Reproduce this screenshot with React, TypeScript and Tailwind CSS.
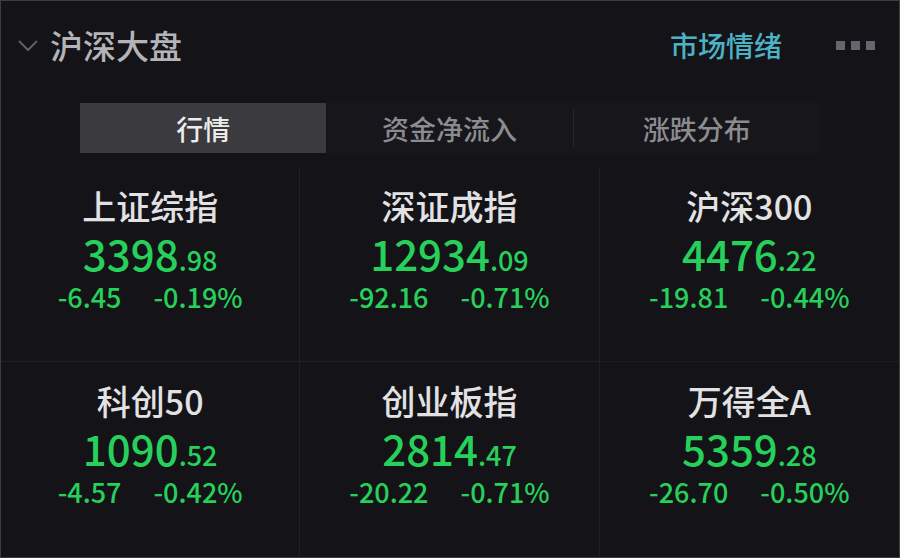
const indices = [
  { name: "上证综指", int: "3398", dec: ".98", chg: "-6.45", pct: "-0.19%" },
  { name: "深证成指", int: "12934", dec: ".09", chg: "-92.16", pct: "-0.71%" },
  { name: "沪深300", int: "4476", dec: ".22", chg: "-19.81", pct: "-0.44%" },
  { name: "科创50", int: "1090", dec: ".52", chg: "-4.57", pct: "-0.42%" },
  { name: "创业板指", int: "2814", dec: ".47", chg: "-20.22", pct: "-0.71%" },
  { name: "万得全A", int: "5359", dec: ".28", chg: "-26.70", pct: "-0.50%" },
];

const tabs = ["行情", "资金净流入", "涨跌分布"];

export default function App() {
  return (
    <div
      className="w-[900px] h-[558px] bg-[#131318] border border-[#3c3c42] overflow-hidden flex flex-col font-medium"
      style={{ fontFamily: '"Noto Sans CJK SC", "Noto Sans", sans-serif' }}
    >
      <div className="flex items-center h-[88px] pl-[16px] pr-[24px]">
        <svg width="22" height="14" viewBox="0 0 22 14" className="mr-[11px] mt-[2px]">
          <path d="M2 2 L11 11 L20 2" fill="none" stroke="#5f5f66" strokeWidth="2" />
        </svg>
        <span className="text-[33px] leading-none text-[#b4b4b8]">沪深大盘</span>
        <span className="ml-auto text-[28px] leading-none text-[#4cb2c6]">市场情绪</span>
        <div className="flex gap-[6px] ml-[54px]">
          <span className="w-[9px] h-[9px] bg-[#66666c]" />
          <span className="w-[9px] h-[9px] bg-[#66666c]" />
          <span className="w-[9px] h-[9px] bg-[#66666c]" />
        </div>
      </div>

      <div className="flex mx-[79px] h-[50px] mt-[14px] bg-[#16161b]">
        {tabs.map((t, i) => (
          <div
            key={t}
            className={
              "flex-1 flex items-center justify-center text-[27px] leading-none " +
              (i === 0
                ? "bg-[#3a3a3f] text-[#ececec]"
                : "text-[#8c8c90]" + (i === 2 ? " border-l border-[#26262c] my-[6px]" : ""))
            }
          >
            {t}
          </div>
        ))}
      </div>

      <div className="grid grid-cols-3 grid-rows-2 flex-1 mt-[14px]">
        {indices.map((d, i) => (
          <div
            key={d.name}
            className={
              "flex flex-col items-center pt-[18px] " +
              (i % 3 !== 2 ? "border-r border-[#1f1f25] " : "") +
              (i < 3 ? "border-b border-[#1c1c22]" : "")
            }
          >
            <div className="text-[34px] leading-[42px] text-[#e2e2e4]">{d.name}</div>
            <div className="flex items-baseline h-[52px] text-[#27d05a]">
              <span className="text-[42px] leading-[52px]">{d.int}</span>
              <span className="text-[27px] leading-[52px]">{d.dec}</span>
            </div>
            <div className="flex gap-[32px] text-[27px] leading-[36px] text-[#27d05a]">
              <span>{d.chg}</span>
              <span>{d.pct}</span>
            </div>
          </div>
        ))}
      </div>
    </div>
  );
}
